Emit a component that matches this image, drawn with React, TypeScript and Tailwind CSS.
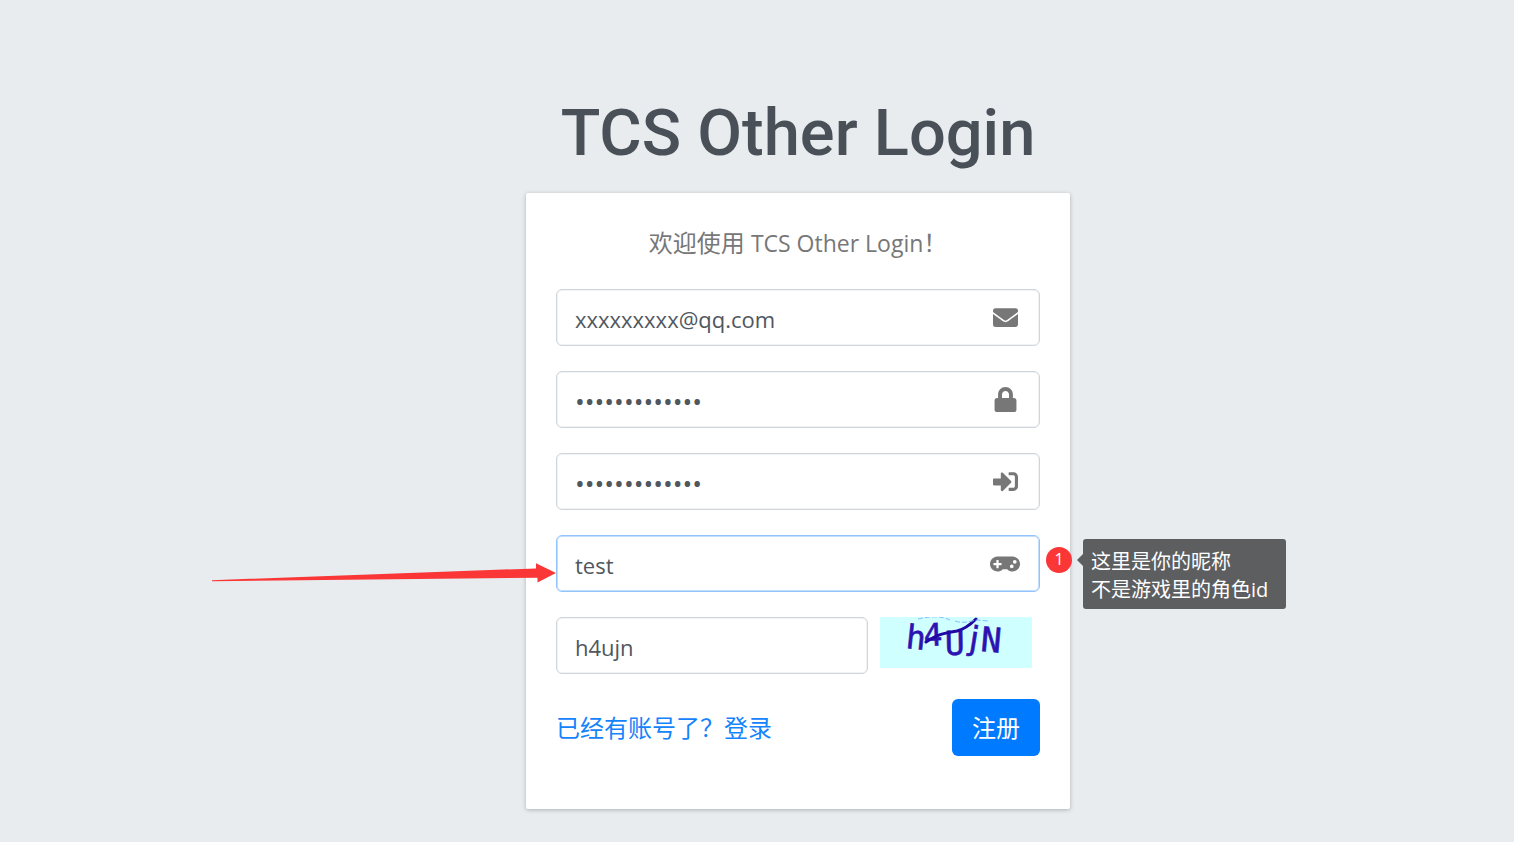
import type { ReactNode } from "react";
import { FaEnvelope, FaGamepad, FaLock, FaSignInAlt } from "react-icons/fa";

type FieldProps = {
  id: string;
  label: string;
  type?: string;
  value: string;
  icon?: ReactNode;
  active?: boolean;
};

function Field({ id, label, type = "text", value, icon, active }: FieldProps) {
  const border = active
    ? "border-[#93c3fb] shadow-[inset_0_0_0_1px_#c3defd]"
    : "border-[#cfd5db] shadow-[inset_0_0_0_1px_#f1f3f5]";
  const size = type === "password" ? "text-[26px]" : "text-[22px]";
  return (
    <div className={`flex h-[57px] w-full items-center rounded-md border bg-white ${border}`}>
      <input
        id={id}
        type={type}
        aria-label={label}
        defaultValue={value}
        className={`h-full min-w-0 flex-1 bg-transparent pt-0.5 pl-[18px] text-[#50575e] outline-none ${size}`}
      />
      {icon && (
        <label htmlFor={id} className="flex w-[68px] justify-center text-[#777777]">
          {icon}
        </label>
      )}
    </div>
  );
}

function Pointer() {
  return (
    <svg
      className="absolute top-7 right-full h-5 w-[344px]"
      viewBox="0 0 344 20"
      aria-hidden="true"
    >
      <path
        d="M0 17.2 L324 5.4 L324 0.2 L344 10 L325.5 19.4 L325.5 14.8 L0 18.2 Z"
        fill="#fb3636"
      />
    </svg>
  );
}

function Note() {
  return (
    <div className="absolute top-1 left-full ml-1.5 flex items-start gap-[11px]">
      <span className="mt-2 flex h-[26px] w-[26px] items-center justify-center rounded-full bg-[#fb3636] pb-0.5 text-base leading-none text-white">
        1
      </span>
      <div className="relative rounded-[3px] bg-[#5d5e60] pt-[9px] pr-[18px] pb-[5px] pl-2 text-xl leading-7 whitespace-nowrap text-white">
        <svg
          className="absolute top-[15px] right-full h-3 w-1.5"
          viewBox="0 0 6 12"
          aria-hidden="true"
        >
          <path d="M6 0 L0 6 L6 12 Z" fill="#5d5e60" />
        </svg>
        <p>这里是你的昵称</p>
        <p>不是游戏里的角色id</p>
      </div>
    </div>
  );
}

function Captcha() {
  return (
    <svg className="h-[51px] w-[152px] shrink-0" viewBox="0 0 152 51" role="img">
      <rect width="152" height="51" fill="#d0ffff" />
      <g
        fill="#2c12b0"
        stroke="#2c12b0"
        strokeWidth="0.6"
        fontFamily="'DejaVu Sans Mono', monospace"
      >
        <text fontSize="33" transform="translate(25 31) rotate(6)">h</text>
        <text fontSize="31" transform="translate(44 29) rotate(-2)">4</text>
        <text fontSize="33" transform="translate(65 38) rotate(-1)">U</text>
        <text
          fontSize="33"
          transform="translate(88 32) rotate(9)"
          fontFamily="'DejaVu Sans', sans-serif"
        >
          j
        </text>
        <text fontSize="34" transform="translate(100 34) rotate(5)">N</text>
      </g>
      <path
        d="M46 25 C57 17 66 16 77 14 C85 12 90 8 96 2"
        fill="none"
        stroke="#2207a4"
        strokeWidth="3"
        strokeLinecap="round"
      />
      <path
        d="M38 2 C50 -1 62 -1 70 3 M75 4 C84 7 90 4 97 3 L108 4"
        fill="none"
        stroke="#80bfff"
        strokeWidth="1"
        strokeDasharray="5 2"
      />
    </svg>
  );
}

export default function App() {
  return (
    <main className="flex min-h-screen flex-col items-center bg-[#e8ecef] pt-[89px] pb-8 pl-[82px] font-['Open_Sans','Noto_Sans_CJK_SC',sans-serif]">
      <h1 className="mb-4 font-['Roboto',sans-serif] text-[65px] leading-[88px] font-medium text-[#495057]">
        TCS Other Login
      </h1>
      <section className="w-full max-w-[544px] rounded-xs bg-white px-[30px] pt-[30px] pb-[53px] shadow-[0_1px_4px_rgba(0,0,0,0.25)]">
        <p className="mb-[26px] text-center text-2xl leading-10 text-[#777777]">
          欢迎使用 <span className="text-[23px]">TCS Other Login</span>！
        </p>
        <form className="flex flex-col gap-[25px]" onSubmit={(e) => e.preventDefault()}>
          <Field
            id="email"
            label="邮箱"
            value="xxxxxxxxx@qq.com"
            icon={<FaEnvelope size={25} />}
          />
          <Field
            id="password"
            label="密码"
            type="password"
            value="abcdefghijklm"
            icon={<FaLock size={25} />}
          />
          <Field
            id="confirm"
            label="确认密码"
            type="password"
            value="abcdefghijklm"
            icon={<FaSignInAlt size={25} />}
          />
          <div className="relative">
            <Field id="nickname" label="昵称" value="test" active icon={<FaGamepad size={30} />} />
            <Pointer />
            <Note />
          </div>
          <div className="flex gap-3 pr-2">
            <Field id="captcha" label="验证码" value="h4ujn" />
            <Captcha />
          </div>
          <div className="flex items-center justify-between">
            <a href="#login" className="text-2xl text-[#1583fb]">
              已经有账号了？登录
            </a>
            <button
              type="submit"
              className="h-[57px] rounded-md bg-[#007bff] px-5 text-2xl text-white"
            >
              注册
            </button>
          </div>
        </form>
      </section>
    </main>
  );
}
